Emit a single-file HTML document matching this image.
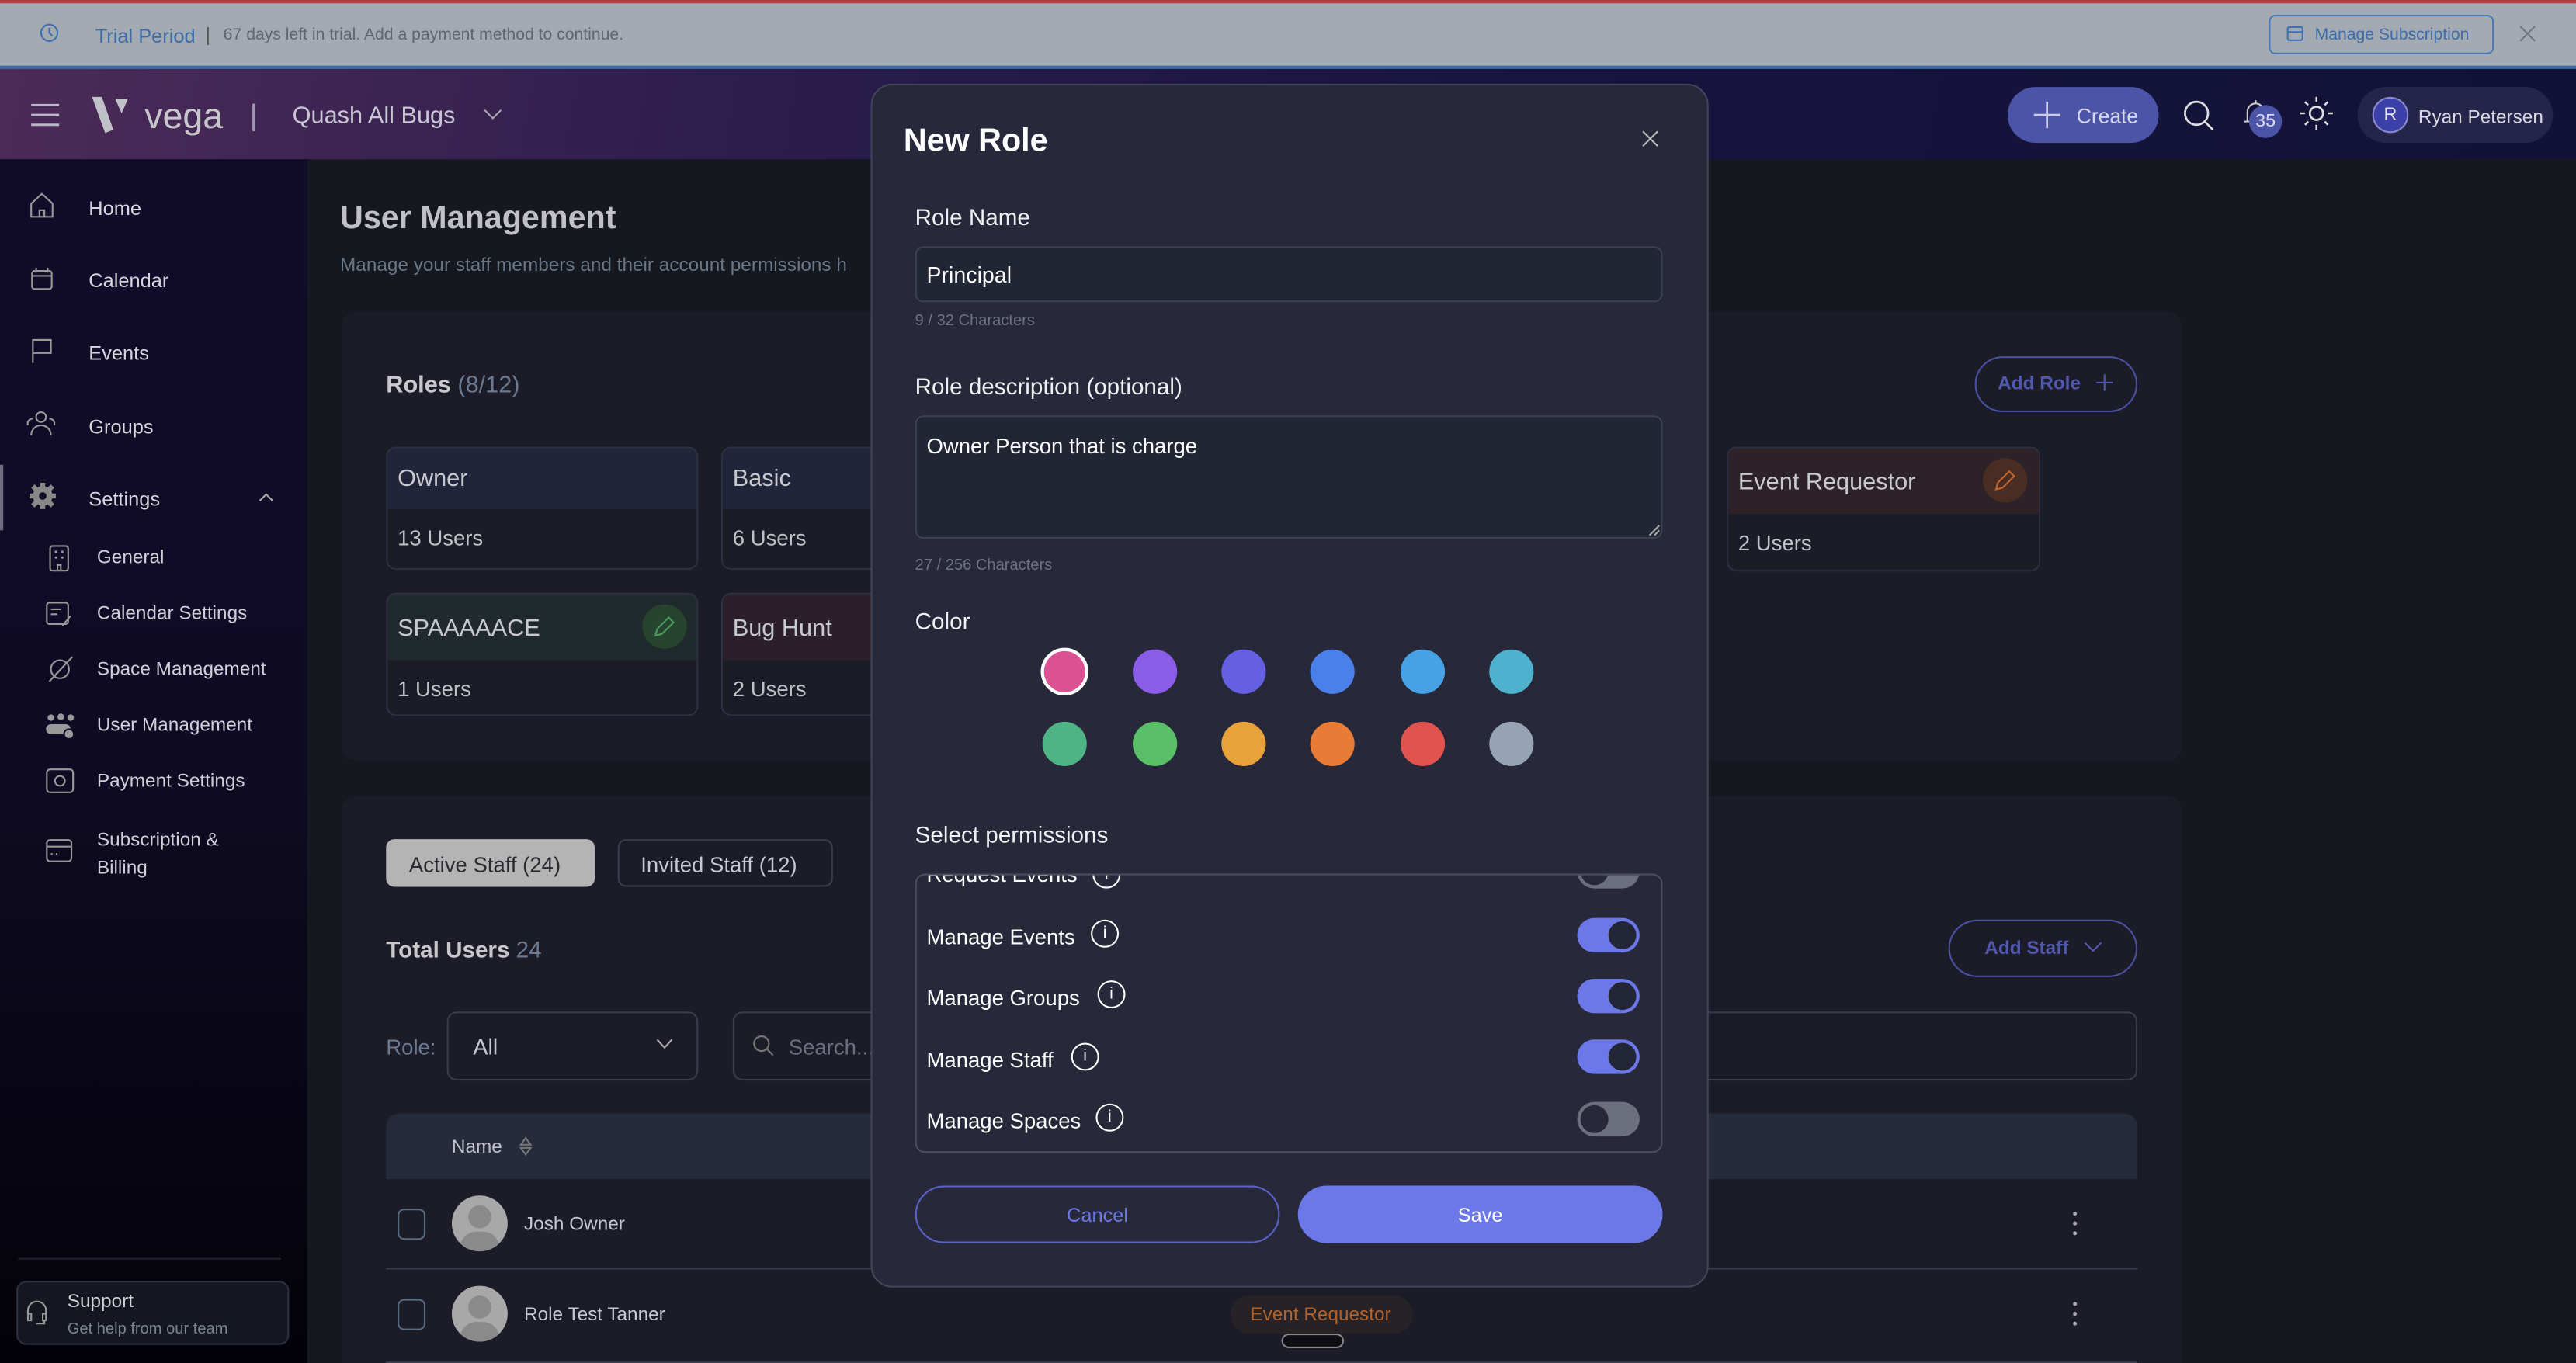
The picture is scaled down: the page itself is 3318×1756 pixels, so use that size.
<!DOCTYPE html>
<html><head><meta charset="utf-8"><style>
*{box-sizing:border-box;margin:0;padding:0}
html,body{width:3318px;height:1756px;overflow:hidden;background:#16181f;font-family:"Liberation Sans",sans-serif}
#w{position:absolute;left:0;top:0;width:1568px;height:830px;transform:scale(2.1161,2.1157);transform-origin:0 0;background:#16181f;overflow:hidden}
.a{position:absolute}
.t{position:absolute;white-space:nowrap;margin-top:1.5px}
svg{position:absolute;overflow:visible}
</style></head><body><div id="w">
<!-- banner -->
<div class="a" style="left:0;top:0;width:1568px;height:42px;background:#a3aab2;border-top:2px solid #b23a3a;border-bottom:2px solid #3a6aa8"></div>
<svg style="left:24px;top:14px" width="12" height="12" viewBox="0 0 12 12"><circle cx="6" cy="6" r="5" fill="none" stroke="#3f6fb0" stroke-width="1"/><path d="M6 3v3l2 2" stroke="#3f6fb0" fill="none"/></svg>
<div class="t" style="left:58px;top:13px;font-size:12px;color:#3d6ca8">Trial Period</div>
<div class="t" style="left:125px;top:12px;font-size:12px;color:#555">|</div>
<div class="t" style="left:136px;top:14px;font-size:10px;color:#5e6673">67 days left in trial. Add a payment method to continue.</div>
<div class="a" style="left:1381px;top:9px;width:137px;height:24px;border:1px solid #4a78b8;border-radius:4px"></div>
<svg style="left:1392px;top:16px" width="10" height="9" viewBox="0 0 10 9"><rect x=".5" y=".5" width="9" height="8" rx="1" fill="none" stroke="#3f6fb0"/><path d="M.5 3.5h9" stroke="#3f6fb0"/></svg>
<div class="t" style="left:1409px;top:14px;font-size:10px;color:#3d6ca8">Manage Subscription</div>
<svg style="left:1534px;top:16px" width="9" height="9"><path d="M0 0L9 9M9 0L0 9" stroke="#6f7780"/></svg>
<!-- header -->
<div class="a" style="left:0;top:42px;width:1568px;height:55px;background:linear-gradient(100deg,#4d2b58 0%,#2b1d4c 30%,#17143d 60%,#121238 100%)"></div>
<svg style="left:19px;top:63px" width="18" height="14"><path d="M0 1h17M0 7h17M0 13h17" stroke="#b8b8c8" stroke-width="1.4"/></svg>
<svg style="left:56px;top:58px" width="24" height="24" viewBox="0 0 24 24"><path d="M0 1l6 0 7 20-5 2z" fill="#c0c0c8"/><path d="M14 2l8 0-4 9z" fill="#c0c0c8"/></svg>
<div class="t" style="left:88px;top:56px;font-size:22px;color:#c6c6cc">vega</div>
<div class="t" style="left:152px;top:58px;font-size:18px;color:#9a96aa">|</div>
<div class="t" style="left:178px;top:61px;font-size:14.5px;color:#c8c6d2">Quash All Bugs</div>
<svg style="left:295px;top:67px" width="10" height="6"><path d="M0 0l5 5 5-5" stroke="#aaa" fill="none"/></svg>
<div class="a" style="left:1222px;top:53px;width:92px;height:34px;border-radius:17px;background:#4c54a8"></div>
<svg style="left:1238px;top:62px" width="16" height="16"><path d="M8 0v16M0 8h16" stroke="#c9cbe8" stroke-width="1.3"/></svg>
<div class="t" style="left:1264px;top:62px;font-size:12.5px;color:#d4d6ee">Create</div>
<svg style="left:1329px;top:61px" width="19" height="19"><circle cx="8" cy="8" r="7" fill="none" stroke="#ddd" stroke-width="1.3"/><path d="M13 13l5 5" stroke="#ddd" stroke-width="1.3"/></svg>
<svg style="left:1366px;top:60px" width="14" height="18"><path d="M2 14V8a5 5 0 0110 0v6zM0 14h14M7 1v2" stroke="#ccc" fill="none"/></svg>
<div class="a" style="left:1369px;top:64px;width:20px;height:20px;border-radius:10px;background:#4c54a8;color:#d8d9f0;font-size:11px;text-align:center;line-height:20px">35</div>
<svg style="left:1400px;top:59px" width="20" height="20"><circle cx="10" cy="10" r="4" fill="none" stroke="#ddd" stroke-width="1.3"/><path d="M10 0v3M10 17v3M0 10h3M17 10h3M3 3l2 2M15 15l2 2M3 17l2-2M15 5l2-2" stroke="#ddd" stroke-width="1.2"/></svg>
<div class="a" style="left:1435px;top:53px;width:119px;height:34px;border-radius:17px;background:#25244a"></div>
<div class="a" style="left:1444px;top:59px;width:22px;height:22px;border-radius:11px;background:#3b3fa8;border:1px solid #8888cc;color:#e0e0f0;font-size:11px;text-align:center;line-height:20px">R</div>
<div class="t" style="left:1472px;top:64px;font-size:11.5px;color:#d8d8e0">Ryan Petersen</div>
<!-- sidebar -->
<div class="a" style="left:0;top:97px;width:187px;height:733px;background:linear-gradient(180deg,#110c2a 0%,#0f0b24 50%,#030208 100%)"></div>
<div class="a" style="left:0;top:283px;width:2px;height:40px;background:#6e6e80"></div>
<div class="t" style="left:54px;top:118px;font-size:12px;color:#d6d6de">Home</div>
<div class="t" style="left:54px;top:162px;font-size:12px;color:#d6d6de">Calendar</div>
<div class="t" style="left:54px;top:206px;font-size:12px;color:#d6d6de">Events</div>
<div class="t" style="left:54px;top:251px;font-size:12px;color:#d6d6de">Groups</div>
<div class="t" style="left:54px;top:295px;font-size:12px;color:#d6d6de">Settings</div>
<svg style="left:158px;top:300px" width="8" height="5"><path d="M0 5l4-4 4 4" stroke="#aaa" fill="none"/></svg>
<div class="t" style="left:59px;top:332px;font-size:11.5px;color:#cfcfd8">General</div>
<div class="t" style="left:59px;top:366px;font-size:11.5px;color:#cfcfd8">Calendar Settings</div>
<div class="t" style="left:59px;top:400px;font-size:11.5px;color:#cfcfd8">Space Management</div>
<div class="t" style="left:59px;top:434px;font-size:11.5px;color:#cfcfd8">User Management</div>
<div class="t" style="left:59px;top:468px;font-size:11.5px;color:#cfcfd8">Payment Settings</div>
<div class="t" style="left:59px;top:502px;font-size:11.5px;color:#cfcfd8;line-height:17px;white-space:normal;width:100px">Subscription &amp; Billing</div>
<svg style="left:18px;top:117px" width="15" height="16"><path d="M1 7L7.5 1 14 7v8H1zM6 15v-4h3v4" stroke="#999" fill="none"/></svg>
<svg style="left:19px;top:162px" width="13" height="15"><rect x=".5" y="3" width="12" height="11" rx="1.5" stroke="#999" fill="none"/><path d="M3 1v3M10 1v3M.5 6h12" stroke="#999"/></svg>
<svg style="left:19px;top:206px" width="13" height="15"><path d="M1 15V1h11v8H1" stroke="#999" fill="none"/></svg>
<svg style="left:16px;top:250px" width="18" height="15"><circle cx="9" cy="4" r="3" stroke="#999" fill="none"/><path d="M3 15a6 6 0 0112 0M1 9a3 3 0 013-4M17 9a3 3 0 00-3-4" stroke="#999" fill="none"/></svg>
<svg style="left:18px;top:294px" width="16" height="16"><circle cx="8" cy="8" r="6" fill="#888"/><path d="M8 0v16M0 8h16M2 2l12 12M14 2L2 14" stroke="#888" stroke-width="3"/><circle cx="8" cy="8" r="2.3" fill="#110c2a"/></svg>
<svg style="left:30px;top:332px" width="12" height="16"><rect x=".5" y=".5" width="11" height="15" rx="1.5" stroke="#999" fill="none"/><path d="M5 15v-3h2v3" stroke="#999" fill="none"/><circle cx="4" cy="4" r=".7" fill="#999"/><circle cx="8" cy="4" r=".7" fill="#999"/><circle cx="4" cy="7.5" r=".7" fill="#999"/><circle cx="8" cy="7.5" r=".7" fill="#999"/></svg>
<svg style="left:28px;top:365px" width="17" height="17"><rect x=".5" y="2" width="13" height="13" rx="1.5" stroke="#999" fill="none"/><path d="M3 6h6M3 9h4M10 16l5-6" stroke="#999" fill="none"/></svg>
<svg style="left:28px;top:399px" width="17" height="17"><circle cx="8.5" cy="8.5" r="5.5" stroke="#999" fill="none"/><path d="M2 16L16 1" stroke="#999"/></svg>
<svg style="left:27px;top:434px" width="19" height="16"><circle cx="4" cy="3" r="2" fill="#999"/><circle cx="10" cy="2.5" r="2" fill="#999"/><circle cx="16" cy="3" r="2" fill="#999"/><rect x="1" y="7" width="15" height="6" rx="3" fill="#999"/><circle cx="15" cy="13" r="3" fill="#999" stroke="#110c2a"/></svg>
<svg style="left:28px;top:468px" width="17" height="15"><rect x=".5" y=".5" width="16" height="14" rx="2" stroke="#999" fill="none"/><circle cx="8.5" cy="7.5" r="3" stroke="#999" fill="none"/></svg>
<svg style="left:28px;top:511px" width="16" height="14"><rect x=".5" y=".5" width="15" height="13" rx="2" stroke="#999" fill="none"/><path d="M.5 4.5h15M3 9h1M6 9h1" stroke="#999"/></svg>
<div class="a" style="left:11px;top:766px;width:160px;height:1px;background:#222030"></div>
<div class="a" style="left:10px;top:780px;width:166px;height:39px;border:1px solid #2e3040;border-radius:6px;background:#14171f"></div>
<svg style="left:16px;top:792px" width="13" height="15"><path d="M1 9V6a5.5 5.5 0 0111 0v3M1 8h2v4H1zM10 8h2v4h-2zM11 12v2H6" stroke="#999" fill="none"/></svg>
<div class="t" style="left:41px;top:785px;font-size:11.5px;color:#d0d0d8">Support</div>
<div class="t" style="left:41px;top:802px;font-size:9.5px;color:#7a8596">Get help from our team</div>
<!-- main -->
<div class="t" style="left:207px;top:120px;font-size:19.5px;font-weight:bold;color:#c0c0c6">User Management</div>
<div class="t" style="left:207px;top:154px;font-size:11.5px;color:#697686">Manage your staff members and their account permissions h</div>
<div class="a" style="left:208px;top:190px;width:1120px;height:273px;background:#1c1c28;border-radius:8px"></div>
<div class="t" style="left:235px;top:225px;font-size:14.5px;font-weight:bold;color:#c8c8cc">Roles <span style="color:#6b7a90;font-weight:normal">(8/12)</span></div>
<div class="a" style="left:1202px;top:217px;width:99px;height:34px;border:1px solid #4a50a0;border-radius:17px"></div>
<div class="t" style="left:1216px;top:226px;font-size:11.5px;font-weight:bold;color:#5058b0">Add Role</div>
<svg style="left:1276px;top:228px" width="10" height="10"><path d="M5 0v10M0 5h10" stroke="#5058b0"/></svg>
<!-- role cards -->
<div class="a" style="left:235px;top:272px;width:190px;height:75px;border:1px solid #2c3040;border-radius:6px;background:#1b1c26;overflow:hidden"><div style="height:37px;background:#202539"></div></div>
<div class="t" style="left:242px;top:282px;font-size:14.5px;color:#c8c8d0">Owner</div>
<div class="t" style="left:242px;top:318px;font-size:13px;color:#c0c0c8">13 Users</div>
<div class="a" style="left:439px;top:272px;width:120px;height:75px;border:1px solid #2c3040;border-radius:6px;background:#1b1c26;overflow:hidden"><div style="height:37px;background:#202539"></div></div>
<div class="t" style="left:446px;top:282px;font-size:14.5px;color:#c8c8d0">Basic</div>
<div class="t" style="left:446px;top:318px;font-size:13px;color:#c0c0c8">6 Users</div>
<div class="a" style="left:235px;top:361px;width:190px;height:75px;border:1px solid #2c3040;border-radius:6px;background:#1b1c26;overflow:hidden"><div style="height:40px;background:#202a2c"></div></div>
<div class="t" style="left:242px;top:373px;font-size:14.5px;color:#c8c8d0">SPAAAAACE</div>
<div class="a" style="left:391px;top:368px;width:27px;height:27px;border-radius:14px;background:#264430"></div>
<svg style="left:398px;top:375px" width="13" height="13"><path d="M1 12l1-4 7-7 3 3-7 7z" stroke="#4c9a5c" fill="none"/></svg>
<div class="t" style="left:242px;top:410px;font-size:13px;color:#c0c0c8">1 Users</div>
<div class="a" style="left:439px;top:361px;width:120px;height:75px;border:1px solid #2c3040;border-radius:6px;background:#1b1c26;overflow:hidden"><div style="height:40px;background:#2b2029"></div></div>
<div class="t" style="left:446px;top:373px;font-size:14.5px;color:#c8c8d0">Bug Hunt</div>
<div class="t" style="left:446px;top:410px;font-size:13px;color:#c0c0c8">2 Users</div>
<div class="a" style="left:1051px;top:272px;width:191px;height:76px;border:1px solid #2c3040;border-radius:6px;background:#1b1c26;overflow:hidden"><div style="height:40px;background:#2c2227"></div></div>
<div class="t" style="left:1058px;top:284px;font-size:14.5px;color:#c8c8d0">Event Requestor</div>
<div class="a" style="left:1207px;top:279px;width:27px;height:27px;border-radius:14px;background:#4a2d22"></div>
<svg style="left:1214px;top:286px" width="13" height="13"><path d="M1 12l1-4 7-7 3 3-7 7z" stroke="#c0632c" fill="none"/></svg>
<div class="t" style="left:1058px;top:321px;font-size:13px;color:#c0c0c8">2 Users</div>
<!-- staff panel -->
<div class="a" style="left:208px;top:485px;width:1120px;height:360px;background:#1c1c28;border-radius:8px"></div>
<div class="a" style="left:235px;top:511px;width:127px;height:29px;border-radius:5px;background:#b4b4b4"></div>
<div class="t" style="left:249px;top:517px;font-size:13px;color:#2a2a30">Active Staff (24)</div>
<div class="a" style="left:376px;top:511px;width:131px;height:29px;border-radius:5px;border:1px solid #3a3c4c"></div>
<div class="t" style="left:390px;top:517px;font-size:13px;color:#c8c8d0">Invited Staff (12)</div>
<div class="t" style="left:235px;top:568px;font-size:14px;font-weight:bold;color:#c8c8cc">Total Users <span style="color:#6b7a90;font-weight:normal">24</span></div>
<div class="a" style="left:1186px;top:560px;width:115px;height:35px;border:1px solid #4a50a0;border-radius:18px"></div>
<div class="t" style="left:1208px;top:570px;font-size:11.5px;font-weight:bold;color:#5058b0">Add Staff</div>
<svg style="left:1269px;top:574px" width="10" height="6"><path d="M0 0l5 5 5-5" stroke="#5058b0" fill="none"/></svg>
<div class="t" style="left:235px;top:628px;font-size:13px;color:#6b7a90">Role:</div>
<div class="a" style="left:272px;top:616px;width:153px;height:42px;border:1px solid #3a3c4c;border-radius:6px"></div>
<div class="t" style="left:288px;top:628px;font-size:13.5px;color:#c8c8d0">All</div>
<svg style="left:400px;top:633px" width="9" height="6"><path d="M0 0l4.5 5 4.5-5" stroke="#aaa" fill="none"/></svg>
<div class="a" style="left:446px;top:616px;width:855px;height:42px;border:1px solid #3a3c4c;border-radius:6px"></div>
<svg style="left:458px;top:630px" width="13" height="13"><circle cx="5.5" cy="5.5" r="4.5" stroke="#777" fill="none"/><path d="M9 9l3.5 3.5" stroke="#777"/></svg>
<div class="t" style="left:480px;top:628px;font-size:13px;color:#6b6e7c">Search...</div>
<div class="a" style="left:235px;top:678px;width:1066px;height:40px;background:#252b3b;border-radius:8px 8px 0 0"></div>
<div class="t" style="left:275px;top:691px;font-size:11.5px;color:#c0c0c8">Name</div>
<svg style="left:316px;top:692px" width="8" height="12"><path d="M1 5l3-4 3 4zM1 7l3 4 3-4z" stroke="#777" fill="none"/></svg>
<div class="a" style="left:235px;top:772px;width:1066px;height:1px;background:#3a3c4c"></div>
<div class="a" style="left:235px;top:829px;width:1066px;height:1px;background:#3a3c4c"></div>
<div class="a" style="left:242px;top:736px;width:17px;height:19px;border:1.5px solid #5a6a80;border-radius:4px"></div>
<div class="a" style="left:242px;top:791px;width:17px;height:19px;border:1.5px solid #5a6a80;border-radius:4px"></div>
<div class="a" style="left:275px;top:728px;width:34px;height:34px;border-radius:17px;background:#a8a8a8;overflow:hidden"><div style="position:absolute;left:10px;top:6px;width:14px;height:14px;border-radius:7px;background:#8a8a8a"></div><div style="position:absolute;left:5px;top:22px;width:24px;height:20px;border-radius:12px;background:#8a8a8a"></div></div>
<div class="a" style="left:275px;top:783px;width:34px;height:34px;border-radius:17px;background:#a8a8a8;overflow:hidden"><div style="position:absolute;left:10px;top:6px;width:14px;height:14px;border-radius:7px;background:#8a8a8a"></div><div style="position:absolute;left:5px;top:22px;width:24px;height:20px;border-radius:12px;background:#8a8a8a"></div></div>
<div class="t" style="left:319px;top:738px;font-size:11.5px;color:#c8c8d0">Josh Owner</div>
<div class="t" style="left:319px;top:793px;font-size:11.5px;color:#c8c8d0">Role Test Tanner</div>
<div class="a" style="left:749px;top:789px;width:111px;height:23px;border-radius:12px;background:#272226"></div>
<div class="t" style="left:761px;top:793px;font-size:11.5px;color:#b0612c">Event Requestor</div>
<div class="a" style="left:780px;top:812px;width:38px;height:9px;border-radius:5px;background:#0e0e14;border:1px solid #888"></div>
<svg style="left:1260px;top:737px" width="6" height="16"><circle cx="3" cy="2" r="1.2" fill="#aaa"/><circle cx="3" cy="8" r="1.2" fill="#aaa"/><circle cx="3" cy="14" r="1.2" fill="#aaa"/></svg>
<svg style="left:1260px;top:792px" width="6" height="16"><circle cx="3" cy="2" r="1.2" fill="#aaa"/><circle cx="3" cy="8" r="1.2" fill="#aaa"/><circle cx="3" cy="14" r="1.2" fill="#aaa"/></svg>
<!-- modal -->
<div class="a" style="left:530px;top:51px;width:510px;height:733px;background:#272839;border:1px solid #424459;border-radius:13px"></div>
<div class="t" style="left:550px;top:73px;font-size:19.5px;font-weight:bold;color:#fff">New Role</div>
<svg style="left:1000px;top:80px" width="9" height="9"><path d="M0 0L9 9M9 0L0 9" stroke="#bbb"/></svg>
<div class="t" style="left:557px;top:122px;font-size:14px;color:#f0f0f4">Role Name</div>
<div class="a" style="left:557px;top:150px;width:455px;height:34px;border:1px solid #3c4052;border-radius:5px;background:#212635"></div>
<div class="t" style="left:564px;top:158px;font-size:13.5px;color:#fff">Principal</div>
<div class="t" style="left:557px;top:188px;font-size:9.5px;color:#6d7383">9 / 32 Characters</div>
<div class="t" style="left:557px;top:225px;font-size:14px;color:#f0f0f4">Role description (optional)</div>
<div class="a" style="left:557px;top:253px;width:455px;height:75px;border:1px solid #3c4052;border-radius:5px;background:#212635"></div>
<div class="t" style="left:564px;top:262px;font-size:13px;color:#fff">Owner Person that is charge</div>
<svg style="left:1004px;top:320px" width="6" height="6"><path d="M0 6L6 0M3 6L6 3" stroke="#aaa"/></svg>
<div class="t" style="left:557px;top:337px;font-size:9.5px;color:#6d7383">27 / 256 Characters</div>
<div class="t" style="left:557px;top:368px;font-size:14px;color:#f0f0f4">Color</div>
<svg style="left:0;top:0" width="1568" height="830">
<circle cx="648" cy="409" r="13.5" fill="#da5293" stroke="#fff" stroke-width="2"/>
<circle cx="703" cy="409" r="13.5" fill="#8a5ce8"/><circle cx="757" cy="409" r="13.5" fill="#6560e2"/><circle cx="811" cy="409" r="13.5" fill="#4b80ea"/><circle cx="866" cy="409" r="13.5" fill="#46a2e4"/><circle cx="920" cy="409" r="13.5" fill="#4eb2cf"/>
<circle cx="648" cy="453" r="13.5" fill="#4fb485"/><circle cx="703" cy="453" r="13.5" fill="#5ac068"/><circle cx="757" cy="453" r="13.5" fill="#e8a23c"/><circle cx="811" cy="453" r="13.5" fill="#e87c36"/><circle cx="866" cy="453" r="13.5" fill="#e0534e"/><circle cx="920" cy="453" r="13.5" fill="#96a3b5"/>
</svg>
<div class="t" style="left:557px;top:498px;font-size:14px;color:#f0f0f4">Select permissions</div>
<div class="a" style="left:557px;top:532px;width:455px;height:170px;border:1px solid #4a4c62;border-radius:6px;overflow:hidden">
  <div class="t" style="left:6px;top:-10px;font-size:13px;color:#fff">Request Events</div>
  <div class="a" style="left:107px;top:-9px;width:17px;height:17px;border:1.3px solid #fff;border-radius:9px;color:#fff;font-size:10px;text-align:center;line-height:15px">i</div>
  <div class="a" style="left:402px;top:-13px;width:38px;height:21px;border-radius:11px;background:#6c6f7c"><div style="position:absolute;left:2px;top:2px;width:17px;height:17px;border-radius:9px;background:#272839"></div></div>
</div>
<div class="t" style="left:564px;top:561px;font-size:13px;color:#fff">Manage Events</div>
<div class="a" style="left:664px;top:560px;width:17px;height:17px;border:1.3px solid #fff;border-radius:9px;color:#fff;font-size:10px;text-align:center;line-height:15px">i</div>
<div class="t" style="left:564px;top:598px;font-size:13px;color:#fff">Manage Groups</div>
<div class="a" style="left:668px;top:597px;width:17px;height:17px;border:1.3px solid #fff;border-radius:9px;color:#fff;font-size:10px;text-align:center;line-height:15px">i</div>
<div class="t" style="left:564px;top:636px;font-size:13px;color:#fff">Manage Staff</div>
<div class="a" style="left:652px;top:635px;width:17px;height:17px;border:1.3px solid #fff;border-radius:9px;color:#fff;font-size:10px;text-align:center;line-height:15px">i</div>
<div class="t" style="left:564px;top:673px;font-size:13px;color:#fff">Manage Spaces</div>
<div class="a" style="left:667px;top:672px;width:17px;height:17px;border:1.3px solid #fff;border-radius:9px;color:#fff;font-size:10px;text-align:center;line-height:15px">i</div>
<div class="a" style="left:960px;top:559px;width:38px;height:21px;border-radius:11px;background:#6c78e8"><div style="position:absolute;left:19px;top:2px;width:17px;height:17px;border-radius:9px;background:#222636"></div></div>
<div class="a" style="left:960px;top:596px;width:38px;height:21px;border-radius:11px;background:#6c78e8"><div style="position:absolute;left:19px;top:2px;width:17px;height:17px;border-radius:9px;background:#222636"></div></div>
<div class="a" style="left:960px;top:633px;width:38px;height:21px;border-radius:11px;background:#6c78e8"><div style="position:absolute;left:19px;top:2px;width:17px;height:17px;border-radius:9px;background:#222636"></div></div>
<div class="a" style="left:960px;top:671px;width:38px;height:21px;border-radius:11px;background:#6c6f7c"><div style="position:absolute;left:2px;top:2px;width:17px;height:17px;border-radius:9px;background:#272839"></div></div>
<div class="a" style="left:557px;top:722px;width:222px;height:35px;border:1px solid #5a62c8;border-radius:18px"></div>
<div class="t" style="left:557px;top:731px;width:222px;text-align:center;font-size:12px;color:#6c78e8">Cancel</div>
<div class="a" style="left:790px;top:722px;width:222px;height:35px;background:#6c78e8;border-radius:18px"></div>
<div class="t" style="left:790px;top:731px;width:222px;text-align:center;font-size:12px;color:#fff">Save</div>
</div></body></html>
